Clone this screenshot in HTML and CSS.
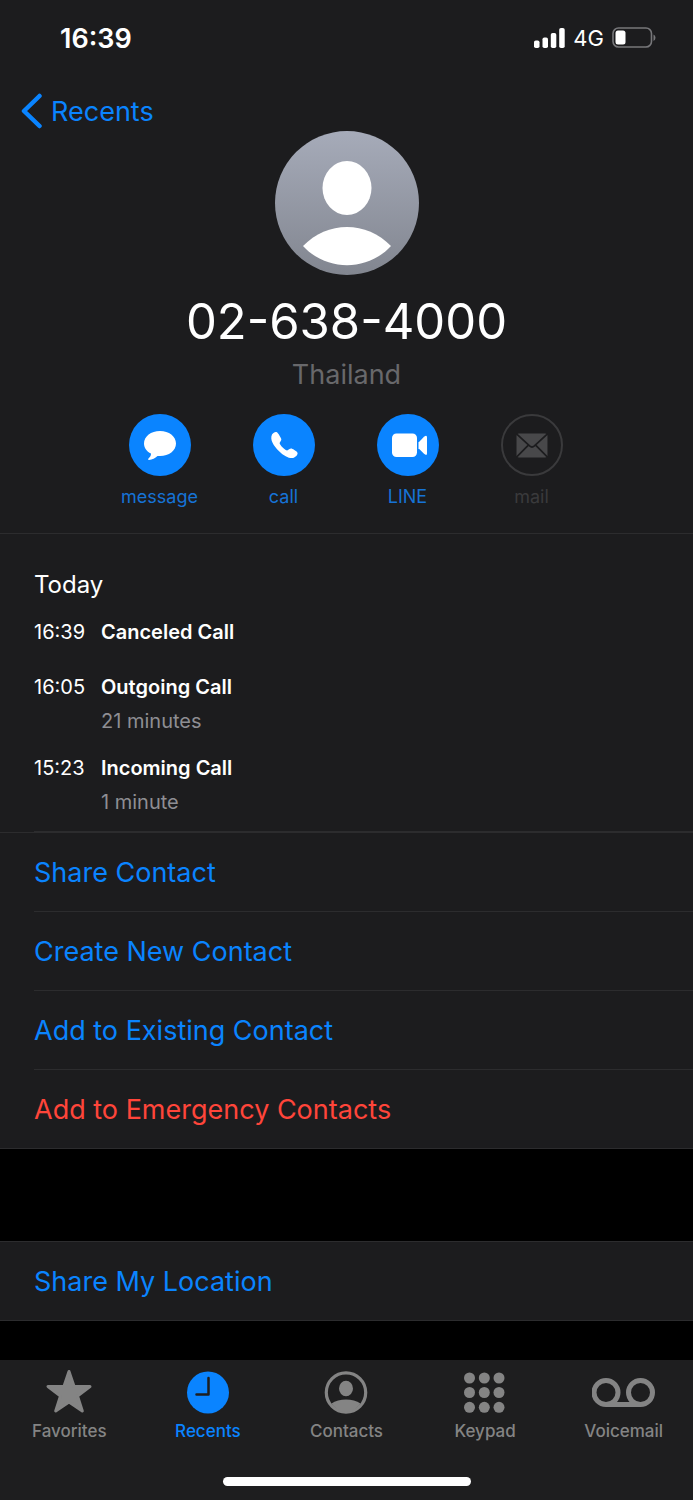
FILE: index.html
```html
<!DOCTYPE html>
<html lang="en">
<head>
<meta charset="utf-8">
<meta name="viewport" content="width=device-width, initial-scale=1">
<title>02-638-4000</title>
<link rel="stylesheet" href="styles.css">
</head>
<body>
<div class="phone">
  <header class="card">
    <div class="status">
      <time class="clock">16:39</time>
      <div class="indicators">
        <svg width="32" height="20" viewBox="0 0 32 20" fill="#fff" aria-hidden="true"><rect x="1" y="12.500" width="5.500" height="7.500" rx="1.800"/><rect x="9.500" y="9.500" width="5.500" height="10.500" rx="1.800"/><rect x="17.800" y="5" width="5.500" height="15" rx="1.800"/><rect x="26.200" y="0" width="5.500" height="20" rx="1.800"/></svg>
        <span class="network">4G</span>
        <svg width="44" height="22" viewBox="0 0 44 22" aria-hidden="true"><rect x="1" y="1" width="38.500" height="19" rx="5.500" fill="none" stroke="#77777a" stroke-width="1.600"/><rect x="3.500" y="3.500" width="10" height="14" rx="2.500" fill="#fff"/><path d="M41.500 7.500q2 1 2 3.200t-2 3.200z" fill="#77777a"/></svg>
      </div>
    </div>
    <nav class="nav">
      <a class="back" href="#recents">
        <svg width="22" height="36" viewBox="0 0 22 36" fill="none" stroke="currentColor" stroke-width="4.500" stroke-linecap="round" stroke-linejoin="round" aria-hidden="true"><path d="M18.500 3 3 18l15.500 15"/></svg>
        <span>Recents</span>
      </a>
    </nav>
    <svg class="avatar" width="144" height="144" viewBox="0 0 144 144" aria-hidden="true">
      <defs><linearGradient id="shade" x1="0" y1="0" x2="0" y2="1"><stop offset="0" stop-color="#a6abb9"/><stop offset="1" stop-color="#828690"/></linearGradient></defs>
      <circle cx="72" cy="72" r="72" fill="url(#shade)"/>
      <ellipse cx="72" cy="57" rx="24.500" ry="27" fill="#fff"/>
      <path d="M28 115C52 89.500 92 89.500 116 115C93 140.500 51 140.500 28 115z" fill="#fff"/>
    </svg>
    <h1 class="number">02-638-4000</h1>
    <p class="place">Thailand</p>
    <div class="actions">
      <button class="action" type="button">
        <span class="disc"><svg width="62" height="62" viewBox="0 0 62 62" fill="#fff" aria-hidden="true"><path d="M31 17c9 0 16 5.300 16 12.500S40 42 31 42l-2.500-.1c-2.300 2.300-5.200 3.700-8.500 4-1 0-1.200-.8-.5-1.400 1.700-1.500 2.500-3 2.500-5C17.500 37.500 15 33.800 15 29.500 15 22.300 22 17 31 17z"/></svg></span>
        <span>message</span>
      </button>
      <button class="action" type="button">
        <span class="disc"><svg width="62" height="62" viewBox="0 0 62 62" fill="#fff" aria-hidden="true"><path d="M19 20.500c1.300-1.800 2.700-2.700 4.200-2.500 1.200.2 2.100 1.600 3.500 3.900 1.600 2.600 2.300 3.500.9 5.300-1.100 1.400-1.200 2-.4 3.300 1.600 2.500 3.200 4 5.500 5.400 1.300.8 2 .6 3.400-.6 1.700-1.400 2.800-.9 5.200.6 2.300 1.400 3.500 2.300 3.300 3.700-.2 1.700-1.800 3.300-3.700 4.100-3.500 1.500-9.500-1.200-14.800-6.500-5.500-5.400-9.500-11.500-7.100-16.700z"/></svg></span>
        <span>call</span>
      </button>
      <button class="action" type="button">
        <span class="disc"><svg width="62" height="62" viewBox="0 0 62 62" fill="#fff" aria-hidden="true"><rect x="15" y="19.500" width="25" height="23.500" rx="4.500"/><path d="M41.500 28.500 47 22.800q3-2.500 3 .5v16q0 3-3 .5l-5.500-5.500z"/></svg></span>
        <span>LINE</span>
      </button>
      <button class="action" type="button" disabled>
        <span class="disc"><svg width="60" height="60" viewBox="0 0 62 62" aria-hidden="true"><rect x="15" y="19" width="32" height="25" rx="2.500" fill="#48484a"/><path d="M15 19.500 28.500 32q2.500 2.200 5 0L47 19.500M15 43.500l12-12M47 43.500l-12-12" fill="none" stroke="#1c1c1e" stroke-width="1.800"/></svg></span>
        <span>mail</span>
      </button>
    </div>
  </header>

  <main class="content">
    <section class="history">
      <h2 class="day">Today</h2>
      <dl class="calls">
        <dt>16:39</dt><dd><strong>Canceled Call</strong></dd>
        <dt>16:05</dt><dd><strong>Outgoing Call</strong><span class="length">21 minutes</span></dd>
        <dt>15:23</dt><dd><strong>Incoming Call</strong><span class="length">1 minute</span></dd>
      </dl>
    </section>
    <div class="group">
      <button class="row" type="button">Share Contact</button>
      <button class="row" type="button">Create New Contact</button>
      <button class="row" type="button">Add to Existing Contact</button>
      <button class="row danger" type="button">Add to Emergency Contacts</button>
    </div>
    <div class="group separate">
      <button class="row" type="button">Share My Location</button>
    </div>
  </main>

  <footer class="tabbar">
    <nav class="tabs">
      <a class="tab" href="#favorites">
        <svg width="48" height="46" viewBox="0 0 48 46" fill="currentColor" stroke="currentColor" stroke-width="3" stroke-linejoin="round" aria-hidden="true"><path d="M24 3.500 29 18.300 45 18.500 32.500 28 37.300 43 24 34 10.700 43 15.500 28 3 18.500 19 18.300z"/></svg>
        <span>Favorites</span>
      </a>
      <a class="tab current" href="#recents" aria-current="page">
        <svg width="48" height="46" viewBox="0 0 48 46" aria-hidden="true"><circle cx="24" cy="24.500" r="21" fill="currentColor"/><path d="M24.500 10v16.500h-12" fill="none" stroke="#1e1e1f" stroke-width="2.500" stroke-linecap="round" stroke-linejoin="round"/></svg>
        <span>Recents</span>
      </a>
      <a class="tab" href="#contacts">
        <svg width="48" height="46" viewBox="0 0 48 46" aria-hidden="true"><circle cx="24" cy="24.500" r="19.700" fill="none" stroke="currentColor" stroke-width="3.200"/><ellipse cx="24" cy="20.500" rx="7" ry="7.700" fill="currentColor"/><path d="M9.500 35.500C17 30 31 30 38.500 35.500 31 46.500 17 46.500 9.500 35.500z" fill="currentColor"/></svg>
        <span>Contacts</span>
      </a>
      <a class="tab" href="#keypad">
        <svg width="48" height="46" viewBox="0 0 48 46" fill="currentColor" aria-hidden="true"><circle cx="8.500" cy="10" r="5.500"/><circle cx="23.300" cy="10" r="5.500"/><circle cx="38" cy="10" r="5.500"/><circle cx="8.500" cy="24.500" r="5.500"/><circle cx="23.300" cy="24.500" r="5.500"/><circle cx="38" cy="24.500" r="5.500"/><circle cx="8.500" cy="39.300" r="5.500"/><circle cx="23.300" cy="39.300" r="5.500"/><circle cx="38" cy="39.300" r="5.500"/></svg>
        <span>Keypad</span>
      </a>
      <a class="tab" href="#voicemail">
        <svg width="64" height="46" viewBox="0 0 64 46" fill="none" stroke="currentColor" stroke-width="5" aria-hidden="true"><circle cx="14" cy="24.500" r="12"/><circle cx="48.500" cy="24.500" r="12"/><path d="M14 36.500h34.500"/></svg>
        <span>Voicemail</span>
      </a>
    </nav>
    <div class="home"></div>
  </footer>
</div>
</body>
</html>
```
FILE: styles.css
```css
* { box-sizing: border-box; }

body {
  margin: 0;
  padding-right: 1px;
  background: #fff;
  color: #fff;
  font-family: Inter, "Liberation Sans", sans-serif;
}

h1, h2, p, dl, dd { margin: 0; font-weight: 400; }
a { color: inherit; text-decoration: none; }
svg { display: block; flex: none; }

button {
  padding: 0;
  border: 0;
  background: none;
  color: #0a84ff;
  font-family: inherit;
}

.phone {
  display: flex;
  flex-direction: column;
  min-height: 100vh;
  background: #000;
}

.card {
  padding-bottom: 24px;
  border-bottom: 1px solid #2c2c2e;
  background: #1c1c1e;
}

.status {
  display: flex;
  align-items: center;
  justify-content: space-between;
  height: 76px;
  padding: 0 37px 0 60px;
}
.clock { font-size: 27px; font-weight: 600; }
.indicators { display: flex; align-items: center; gap: 8px; }
.network { font-size: 22px; font-weight: 400; }

.nav { padding: 15px 21px 0; }
.back {
  display: inline-flex;
  align-items: center;
  gap: 8px;
  height: 40px;
  color: #0a84ff;
  font-size: 27px;
  vertical-align: top;
}

.avatar { margin: 0 auto; }
.number {
  margin-top: 17px;
  font-size: 49px;
  line-height: 60px;
  text-align: center;
}
.place {
  margin-top: 7px;
  color: #68686b;
  font-size: 27px;
  line-height: 32px;
  text-align: center;
}

.actions {
  display: grid;
  grid-template-columns: repeat(4, 124px);
  justify-content: center;
  margin-top: 23px;
  padding-right: 2px;
}
.action {
  display: flex;
  flex-direction: column;
  align-items: center;
  gap: 9px;
  color: #1673d6;
  font-size: 18px;
  line-height: 24px;
}
.disc {
  width: 62px;
  height: 62px;
  border-radius: 50%;
  background: #0a84ff;
}
.action:disabled { color: #3a3a3c; }
.action:disabled .disc { border: 2px solid #3a3a3c; background: none; }
.action:disabled svg { margin: -1px; }

.content { flex: 1; }
.history {
  padding-top: 35px;
  background: #1c1c1e;
}
.day { padding-left: 34px; font-size: 24px; line-height: 32px; }
.calls {
  display: grid;
  grid-template-columns: 67px 1fr;
  row-gap: 13px;
  margin: 14px 0 0 34px;
  padding-bottom: 12px;
  border-bottom: 1px solid #2c2c2e;
  font-size: 20px;
  line-height: 34px;
}
.calls dd:first-of-type { padding-bottom: 8px; }
.calls strong { font-weight: 600; }
.length { display: block; color: #8e8e93; }

.group {
  border-top: 1px solid #2c2c2e;
  border-bottom: 1px solid #2c2c2e;
  background: #1c1c1e;
}
.separate { margin: 92px 0 38px; }
.row {
  display: block;
  width: calc(100% - 34px);
  height: 78px;
  margin-left: 34px;
  font-size: 27px;
  text-align: left;
}
.row + .row { height: 79px; border-top: 1px solid #2c2c2e; }
.danger { color: #ff453a; }

.tabbar {
  padding: 8px 0 14px;
  background: #1e1e1f;
}
.tabs { display: grid; grid-template-columns: repeat(5, 1fr); }
.tab {
  display: flex;
  flex-direction: column;
  align-items: center;
  gap: 5px;
  color: #848484;
  font-size: 17px;
  font-weight: 500;
  line-height: 24px;
}
.current { color: #0a84ff; }
.home {
  width: 248px;
  height: 9px;
  margin: 34px auto 0;
  border-radius: 5px;
  background: #fff;
}
```
